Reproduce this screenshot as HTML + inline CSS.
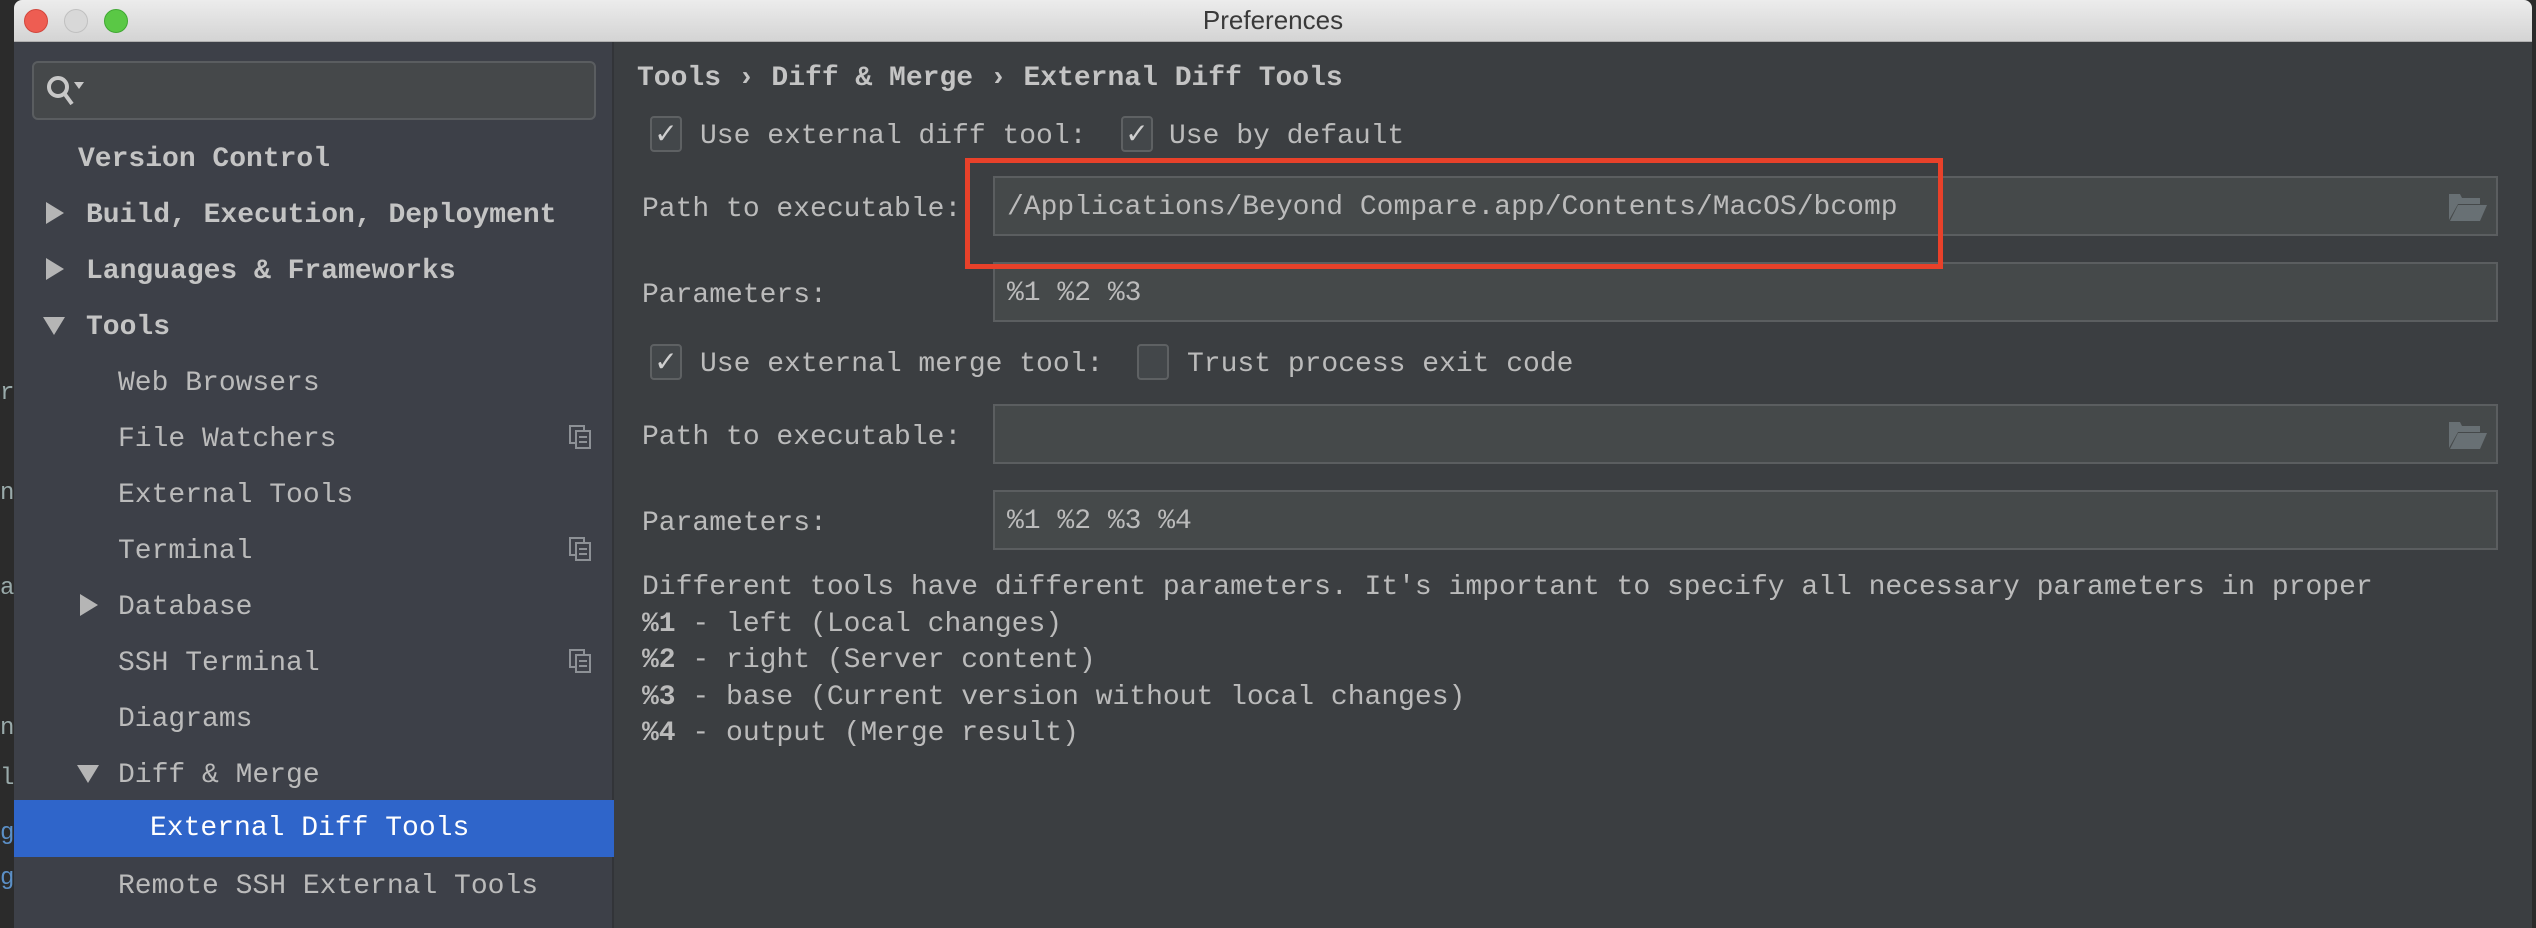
<!DOCTYPE html>
<html><head><meta charset="utf-8"><style>
*{margin:0;padding:0;box-sizing:border-box}
body{width:2536px;height:928px;overflow:hidden;background:#2b2b2b;font-family:"Liberation Mono","DejaVu Sans Mono",monospace;font-size:28px;color:#bbbbbb;position:relative}
.abs{position:absolute;white-space:nowrap}
#title{left:14px;top:0;width:2518px;height:42px;background:linear-gradient(#ececec,#d4d4d4);border-bottom:1px solid #b0b0b0;border-radius:8px 8px 0 0}
#title .t{position:absolute;left:0;right:0;top:5px;text-align:center;font-family:"Liberation Sans",sans-serif;font-size:26px;color:#3a3a3a}
.dot{position:absolute;top:9px;width:24px;height:24px;border-radius:50%}
#side{left:14px;top:42px;width:600px;height:886px;background:#3d4048;border-right:2px solid #323438}
#main{left:614px;top:42px;width:1918px;height:886px;background:#3b3e41}
.row{position:absolute;left:14px;width:600px;height:56px;line-height:56px;white-space:nowrap}
.b{font-weight:bold;color:#c4c4c4}
.tri{position:absolute}
.field{position:absolute;left:993px;width:1505px;height:60px;background:#45494a;border:2px solid #5b5e60;line-height:60px;padding-left:12px;color:#bbbbbb}
.cb{position:absolute;width:32px;height:36px;border:2px solid #5e6163;border-radius:4px;background:#43474a;color:#cfcfcf;font-size:28px;line-height:32px;text-align:center;font-family:"DejaVu Sans",sans-serif}
.lbl{position:absolute;white-space:nowrap;line-height:40px}
.fold{position:absolute;left:2448px}
.copy{position:absolute;left:568px}
</style></head><body>
<div class="abs" style="left:0;top:380px;font-size:24px;color:#9aa">r</div>
<div class="abs" style="left:0;top:480px;font-size:24px;color:#9aa">n</div>
<div class="abs" style="left:0;top:575px;font-size:24px;color:#9aa">a</div>
<div class="abs" style="left:0;top:715px;font-size:24px;color:#9aa">n</div>
<div class="abs" style="left:0;top:765px;font-size:24px;color:#9aa">l</div>
<div class="abs" style="left:0;top:820px;font-size:24px;color:#5b8fc6">g</div>
<div class="abs" style="left:0;top:865px;font-size:24px;color:#5b8fc6">g</div>

<div id="title" class="abs"><div class="t">Preferences</div>
<div class="dot" style="left:10px;background:#ee5d52;border:1px solid #d2463c"></div>
<div class="dot" style="left:50px;background:#d8d8d8;border:1px solid #c0c0c0"></div>
<div class="dot" style="left:90px;background:#5ac845;border:1px solid #40a833"></div>
</div>

<div id="side" class="abs"></div>
<div class="abs" style="left:32px;top:61px;width:564px;height:59px;background:#45484a;border:2px solid #5a5d60;border-radius:6px"></div>
<svg class="abs" style="left:44px;top:72px" width="50" height="40" viewBox="0 0 50 40"><circle cx="14" cy="15" r="9" fill="none" stroke="#c8c8c8" stroke-width="4"/><line x1="20" y1="21" x2="28" y2="32" stroke="#c8c8c8" stroke-width="4"/><polygon points="30,10 40,10 35,17" fill="#c8c8c8"/></svg>

<div class="abs" style="left:14px;top:800px;width:600px;height:57px;background:#2f65ca"></div>

<div class="row b" style="top:132px;padding-left:64px">Version Control</div>
<div class="row b" style="top:188px;padding-left:72px">Build, Execution, Deployment</div>
<div class="row b" style="top:244px;padding-left:72px">Languages &amp; Frameworks</div>
<div class="row b" style="top:300px;padding-left:72px">Tools</div>
<div class="row" style="top:356px;padding-left:104px">Web Browsers</div>
<div class="row" style="top:412px;padding-left:104px">File Watchers</div>
<div class="row" style="top:468px;padding-left:104px">External Tools</div>
<div class="row" style="top:524px;padding-left:104px">Terminal</div>
<div class="row" style="top:580px;padding-left:104px">Database</div>
<div class="row" style="top:636px;padding-left:104px">SSH Terminal</div>
<div class="row" style="top:692px;padding-left:104px">Diagrams</div>
<div class="row" style="top:748px;padding-left:104px">Diff &amp; Merge</div>
<div class="row" style="top:801px;padding-left:136px;color:#ffffff">External Diff Tools</div>
<div class="row" style="top:859px;padding-left:104px">Remote SSH External Tools</div>

<svg class="tri" style="left:44px;top:201px" width="22" height="24"><polygon points="2,1 20,12 2,23" fill="#b5b5b5"/></svg>
<svg class="tri" style="left:44px;top:257px" width="22" height="24"><polygon points="2,1 20,12 2,23" fill="#b5b5b5"/></svg>
<svg class="tri" style="left:42px;top:315px" width="24" height="22"><polygon points="1,2 23,2 12,20" fill="#b5b5b5"/></svg>
<svg class="tri" style="left:78px;top:593px" width="22" height="24"><polygon points="2,1 20,12 2,23" fill="#b5b5b5"/></svg>
<svg class="tri" style="left:76px;top:763px" width="24" height="22"><polygon points="1,2 23,2 12,20" fill="#b5b5b5"/></svg>

<svg class="copy" style="top:424px" width="24" height="26"><rect x="2" y="2" width="14" height="17" fill="none" stroke="#8d9196" stroke-width="2"/><rect x="8" y="7" width="14" height="17" fill="#3d4048" stroke="#8d9196" stroke-width="2"/><line x1="11" y1="13" x2="19" y2="13" stroke="#8d9196" stroke-width="2"/><line x1="11" y1="18" x2="19" y2="18" stroke="#8d9196" stroke-width="2"/></svg>
<svg class="copy" style="top:536px" width="24" height="26"><rect x="2" y="2" width="14" height="17" fill="none" stroke="#8d9196" stroke-width="2"/><rect x="8" y="7" width="14" height="17" fill="#3d4048" stroke="#8d9196" stroke-width="2"/><line x1="11" y1="13" x2="19" y2="13" stroke="#8d9196" stroke-width="2"/><line x1="11" y1="18" x2="19" y2="18" stroke="#8d9196" stroke-width="2"/></svg>
<svg class="copy" style="top:648px" width="24" height="26"><rect x="2" y="2" width="14" height="17" fill="none" stroke="#8d9196" stroke-width="2"/><rect x="8" y="7" width="14" height="17" fill="#3d4048" stroke="#8d9196" stroke-width="2"/><line x1="11" y1="13" x2="19" y2="13" stroke="#8d9196" stroke-width="2"/><line x1="11" y1="18" x2="19" y2="18" stroke="#8d9196" stroke-width="2"/></svg>

<div id="main" class="abs"></div>
<div class="abs b" style="left:637px;top:61px;line-height:36px">Tools › Diff &amp; Merge › External Diff Tools</div>

<div class="cb" style="left:650px;top:116px">✓</div>
<div class="lbl" style="left:700px;top:117px">Use external diff tool:</div>
<div class="cb" style="left:1121px;top:116px">✓</div>
<div class="lbl" style="left:1169px;top:117px">Use by default</div>

<div class="lbl" style="left:642px;top:190px">Path to executable:</div>
<div class="field" style="top:176px">/Applications/Beyond Compare.app/Contents/MacOS/bcomp</div>
<div class="lbl" style="left:642px;top:276px">Parameters:</div>
<div class="field" style="top:262px">%1 %2 %3</div>

<div class="cb" style="left:650px;top:344px">✓</div>
<div class="lbl" style="left:700px;top:345px">Use external merge tool:</div>
<div class="cb" style="left:1137px;top:344px"></div>
<div class="lbl" style="left:1187px;top:345px">Trust process exit code</div>

<div class="lbl" style="left:642px;top:418px">Path to executable:</div>
<div class="field" style="top:404px"></div>
<div class="lbl" style="left:642px;top:504px">Parameters:</div>
<div class="field" style="top:490px">%1 %2 %3 %4</div>

<svg class="fold" style="top:192px" width="40" height="30"><path d="M1 2 H12 L14 6 H32 V12 H10 L1 28 Z" fill="#687074"/><path d="M10 13 H39 L32 29 H2 Z" fill="#687074"/></svg>
<svg class="fold" style="top:420px" width="40" height="30"><path d="M1 2 H12 L14 6 H32 V12 H10 L1 28 Z" fill="#687074"/><path d="M10 13 H39 L32 29 H2 Z" fill="#687074"/></svg>

<div class="abs" style="left:965px;top:158px;width:978px;height:111px;border:5px solid #e8412a"></div>

<div class="abs" style="left:642px;top:570px;width:1743px;overflow:hidden;line-height:36.5px">Different tools have different parameters. It's important to specify all necessary parameters in proper order<br><b>%1</b> - left (Local changes)<br><b>%2</b> - right (Server content)<br><b>%3</b> - base (Current version without local changes)<br><b>%4</b> - output (Merge result)</div>
</body></html>
